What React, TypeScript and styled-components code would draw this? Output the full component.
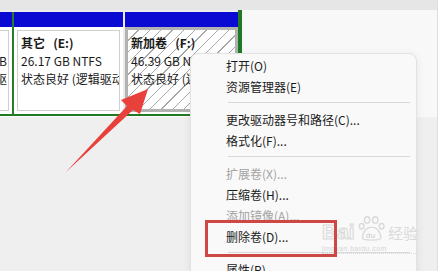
import { ReactElement } from 'react';
import styled, { createGlobalStyle } from 'styled-components';

const GlobalStyle = createGlobalStyle`
  html, body {
    margin: 0;
    padding: 0;
    background: #efefef;
    overflow: hidden;
  }
  body {
    font-family: "Noto Sans CJK SC", "Noto Sans", sans-serif;
  }
`;

interface Volume {
  title: string;
  size: string;
  status: string;
  selected?: boolean;
  clipped?: boolean;
  width: number;
}

const volumes: Volume[] = [
  { title: '', size: '49.97 GB', status: '状态良好 (逻辑驱', width: 12, clipped: true },
  { title: '其它   (E:)', size: '26.17 GB NTFS', status: '状态良好 (逻辑驱动器)', width: 109 },
  { title: '新加卷   (F:)', size: '46.39 GB NTFS', status: '状态良好 (逻辑驱动器)', width: 113, selected: true },
];

const menuItems: (string | { label: string; disabled?: boolean })[] = [
  { label: '打开(O)' },
  { label: '资源管理器(E)' },
  '-',
  { label: '更改驱动器号和路径(C)...' },
  { label: '格式化(F)...' },
  '-',
  { label: '扩展卷(X)...', disabled: true },
  { label: '压缩卷(H)...' },
  { label: '添加镜像(A)...', disabled: true },
  { label: '删除卷(D)...' },
  '-',
  { label: '属性(P)' },
  '-',
  { label: '帮助(H)' },
];

const VolumeCell = ({ vol }: { vol: Volume }): ReactElement => (
  <StyledCell $width={vol.width}>
    <StyledCellHeader />
    <StyledCellBody $selected={vol.selected}>
      <StyledCellInner $selected={vol.selected} $clipped={vol.clipped}>
        <StyledTitle>{vol.title || '\u00a0'}</StyledTitle>
        <StyledLine>{vol.size}</StyledLine>
        <StyledLine>{vol.status}</StyledLine>
      </StyledCellInner>
    </StyledCellBody>
  </StyledCell>
);

const Watermark = (): ReactElement => (
  <StyledWatermark>
    <StyledWmRow>
      <StyledWmBig>Bai</StyledWmBig>
      <svg width="28" height="28" viewBox="0 0 30 30">
        <g fill="none" stroke="#dadada" strokeWidth="1.5">
          <ellipse cx="10" cy="5" rx="3" ry="3.5" />
          <ellipse cx="19" cy="5" rx="3" ry="3.5" />
          <ellipse cx="4" cy="12" rx="2.6" ry="3" />
          <ellipse cx="26" cy="12" rx="2.6" ry="3" />
          <path d="M5 25 C5 17 10 13 15 13 C20 13 25 17 25 25 C25 28 5 28 5 25 Z" />
        </g>
        <text x="8.5" y="25" fontSize="8.5" fill="#d6d6d6" fontFamily="Liberation Sans, sans-serif" fontWeight="700">
          du
        </text>
      </svg>
      <StyledWmCn>经验</StyledWmCn>
    </StyledWmRow>
    <StyledWmUrl>jingyan.baidu.com</StyledWmUrl>
  </StyledWatermark>
);

const App = (): ReactElement => {
  return (
    <>
      <GlobalStyle />
      <StyledScreen>
        <StyledMain>
          <StyledTopStrip />
          <StyledDiskRow>
            <StyledFrame>
              {volumes.map((v, i) => (
                <VolumeCell key={i} vol={v} />
              ))}
            </StyledFrame>
            <StyledRowFiller />
          </StyledDiskRow>
          <StyledLowerArea />
        </StyledMain>
        <StyledEdgeRail />

        <StyledArrow width="439" height="271" viewBox="0 0 439 271">
          <polygon
            points="66,172 127,106 121,100 148,89 140,114 133,110"
            fill="#e8413b"
          />
        </StyledArrow>

        <StyledMenu>
          {menuItems.map((m, i) =>
            m === '-' ? (
              <StyledSeparator key={i} />
            ) : typeof m !== 'string' ? (
              <StyledMenuItem key={i} $disabled={m.disabled}>
                {m.label}
              </StyledMenuItem>
            ) : null,
          )}
        </StyledMenu>

        <Watermark />
        <StyledHighlight />
      </StyledScreen>
    </>
  );
};

export default App;

const StyledScreen = styled.div`
  position: relative;
  width: 439px;
  height: 271px;
  display: flex;
  overflow: hidden;
  background: #efefef;
`;

const StyledMain = styled.div`
  flex: 1;
  display: flex;
  flex-direction: column;
`;

const StyledTopStrip = styled.div`
  height: 10px;
  background: #e6e6e6;
`;

const StyledDiskRow = styled.div`
  display: flex;
  height: 106px;
`;

const StyledFrame = styled.div`
  display: flex;
  gap: 2px;
  width: 238px;
  padding-top: 2px;
  background: #ececec;
  border-right: 4px solid #1f7a22;
  border-bottom: 2px solid #1f7a22;
  box-sizing: content-box;
  height: 102px;

  & > div:first-child {
    border-right: 2px solid #2a7d2c;
    margin-right: -2px;
  }
`;

const StyledRowFiller = styled.div`
  flex: 1;
  background: #f8f8f8;
`;

const StyledLowerArea = styled.div`
  flex: 1;
  background: #efefef;
  border-top: 1px solid #fafafa;
`;

const StyledEdgeRail = styled.div`
  width: 1px;
  border-left: 1px solid #dedede;
  background: #ffffff;
`;

const StyledCell = styled.div<{ $width: number }>`
  width: ${(p) => p.$width}px;
  display: flex;
  flex-direction: column;
  flex-shrink: 0;
`;

const StyledCellHeader = styled.div`
  height: 15px;
  background: #0a0ad2;
`;

const StyledCellBody = styled.div<{ $selected?: boolean }>`
  flex: 1;
  background: #ffffff;
  padding: ${(p) => (p.$selected ? '0 0 2px' : '3px')};
  display: flex;
  min-height: 0;
  min-width: 0;
`;

const StyledCellInner = styled.div<{ $selected?: boolean; $clipped?: boolean }>`
  flex: 1;
  min-width: 0;
  overflow: hidden;
  white-space: pre;
  border: ${(p) => (p.$selected ? '3px solid #b2b2b2' : '1px solid #cfcfcf')};
  border-left-width: ${(p) => (p.$clipped ? 0 : '')};
  margin-left: ${(p) => (p.$clipped ? '-3px' : '0')};
  padding: ${(p) => (p.$selected ? '4px 3px' : p.$clipped ? '3px 1px' : '3px 3px')};
  display: flex;
  flex-direction: column;
  align-items: ${(p) => (p.$clipped ? 'flex-end' : 'flex-start')};
  background: ${(p) =>
    p.$selected
      ? 'repeating-linear-gradient(135deg, #ffffff 0px, #ffffff 7px, #a9a9a9 7px, #a9a9a9 8px)'
      : '#ffffff'};
  font-size: 12px;
  line-height: 18px;
  color: #1a1a1a;
`;

const StyledTitle = styled.div`
  font-weight: 700;
  flex-shrink: 0;
`;

const StyledLine = styled.div`
  flex-shrink: 0;
`;

const StyledArrow = styled.svg`
  position: absolute;
  left: 0;
  top: 0;
  pointer-events: none;
`;

const StyledMenu = styled.div`
  position: absolute;
  left: 190px;
  top: 53px;
  width: 225px;
  padding-top: 1px;
  background: #f9f9f9;
  border: 1px solid #e2e2e2;
  border-radius: 8px;
  box-shadow: 0 2px 8px rgba(0, 0, 0, 0.08);
  font-size: 12px;
`;

const StyledMenuItem = styled.div<{ $disabled?: boolean }>`
  height: 21px;
  line-height: 21px;
  padding-left: 35px;
  white-space: nowrap;
  color: ${(p) => (p.$disabled ? '#a3a3a3' : '#1b1b1b')};
`;

const StyledSeparator = styled.div`
  height: 12px;
  margin: 0 6px 0 37px;
  position: relative;

  &::after {
    content: '';
    position: absolute;
    left: 0;
    right: 0;
    top: 5px;
    height: 1px;
    background: #d8d8d8;
  }
`;

const StyledHighlight = styled.div`
  position: absolute;
  left: 205px;
  top: 220px;
  width: 126px;
  height: 31px;
  border: 3px solid #cf4744;
  pointer-events: none;
`;

const StyledWatermark = styled.div`
  position: absolute;
  left: 322px;
  top: 215px;
  width: 96px;
  display: flex;
  flex-direction: column;
  gap: 1px;
  pointer-events: none;
`;

const StyledWmRow = styled.div`
  display: flex;
  align-items: flex-end;
  gap: 3px;
`;

const StyledWmBig = styled.span`
  font-family: 'Liberation Sans', sans-serif;
  font-size: 21px;
  font-weight: 700;
  line-height: 22px;
  color: transparent;
  -webkit-text-stroke: 1px #d8d8d8;
`;

const StyledWmCn = styled.span`
  font-size: 15px;
  line-height: 20px;
  color: #dadada;
  white-space: nowrap;
`;

const StyledWmUrl = styled.span`
  font-family: 'Liberation Sans', sans-serif;
  font-size: 7px;
  line-height: 9px;
  letter-spacing: 0.5px;
  color: #d4d4d4;
  border-bottom: 1px dotted #dadada;
  white-space: nowrap;
`;
